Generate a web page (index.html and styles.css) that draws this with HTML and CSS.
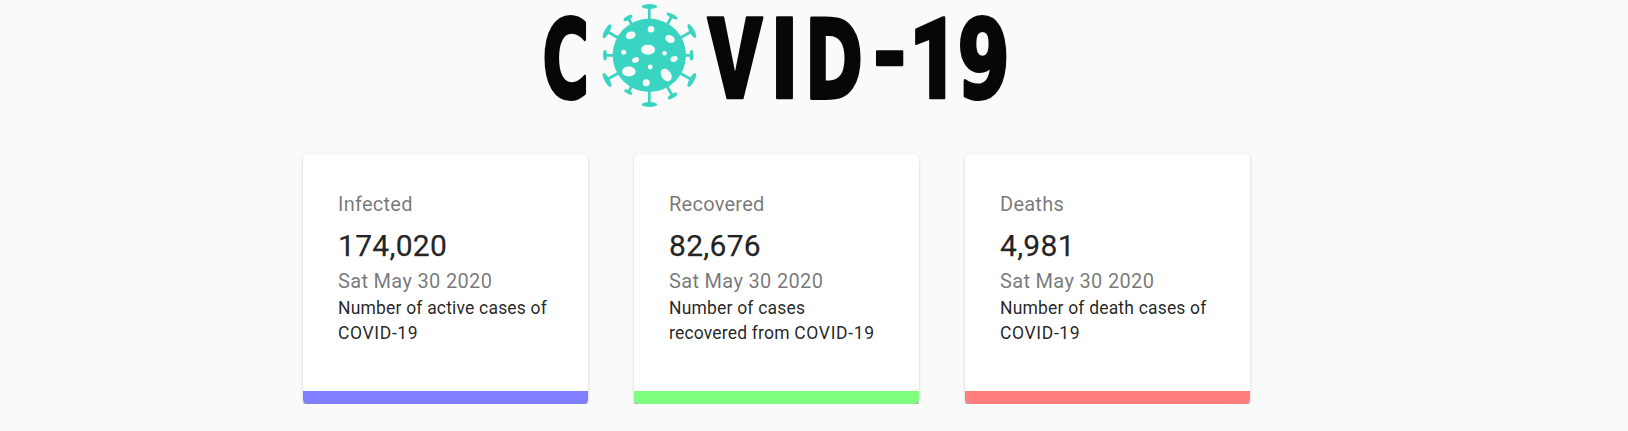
FILE: index.html
```html
<!DOCTYPE html>
<html lang="en">
<head>
<meta charset="utf-8">
<title>COVID-19 Tracker</title>
<link rel="stylesheet" href="styles.css">
</head>
<body>
<main class="container">
  <svg class="logo" width="500" height="115" viewBox="530 0 500 115" role="img" aria-label="COVID-19">
    <g class="logo-text">
      <text class="wide" transform="translate(542.5 97) scale(.58 1)">C</text>
      <text transform="translate(707.8 97.5) scale(.725 1)">V</text>
      <text transform="translate(771.2 97.5) scale(.77 1)">I</text>
      <text class="wide" transform="translate(805 97.5) scale(.64 1)">D</text>
      <text transform="translate(870.5 91) scale(.76 .93)">-</text>
      <text transform="translate(909 97.5) scale(.76 1)">1</text>
      <text class="wide" transform="translate(957.5 97) scale(.69 1)">9</text>
    </g>
    <g class="virus">
      <circle cx="649.3" cy="55.3" r="36.7"/>
      <path class="stems" d="M649.3 7V104M606 55.3H691M608 32L690.5 79M608 79L690.5 32M628.5 18.5L672 95M671.5 17L629 91"/>
      <ellipse cx="649.5" cy="6.5" rx="7.7" ry="2.5"/>
      <ellipse cx="649.5" cy="104.5" rx="7.7" ry="2.5"/>
      <ellipse cx="605" cy="55.3" rx="1.9" ry="5.3"/>
      <ellipse cx="691.5" cy="55.3" rx="1.9" ry="5.3"/>
      <ellipse cx="607" cy="31.3" rx="2.5" ry="7.8" transform="rotate(29 607 31.3)"/>
      <ellipse cx="607" cy="80" rx="2.5" ry="7.8" transform="rotate(-29 607 80)"/>
      <ellipse cx="691.8" cy="31" rx="2.5" ry="7.8" transform="rotate(-29 691.8 31)"/>
      <ellipse cx="691.8" cy="80" rx="2.5" ry="7.8" transform="rotate(29 691.8 80)"/>
      <ellipse cx="628" cy="18" rx="5" ry="2.1" transform="rotate(-29 628 18)"/>
      <ellipse cx="672" cy="16" rx="6.2" ry="2.1" transform="rotate(28 672 16)"/>
      <ellipse cx="628.3" cy="92" rx="4.5" ry="1.7" transform="rotate(28 628.3 92)"/>
      <ellipse cx="672.5" cy="96" rx="5.3" ry="2.1" transform="rotate(-30 672.5 96)"/>
      <g class="spots">
        <circle cx="651" cy="29.3" r="3.3"/>
        <ellipse cx="630.7" cy="35.3" rx="5" ry="3.7" transform="rotate(-22 630.7 35.3)"/>
        <ellipse cx="670" cy="39" rx="5" ry="3.7" transform="rotate(30 670 39)"/>
        <ellipse cx="648" cy="49.7" rx="7" ry="5"/>
        <circle cx="623.7" cy="52.2" r="2.5"/>
        <circle cx="664.6" cy="53.3" r="2.3"/>
        <ellipse cx="635.6" cy="60" rx="3.6" ry="2.7" transform="rotate(-28 635.6 60)"/>
        <ellipse cx="674" cy="59" rx="3.7" ry="2.7" transform="rotate(-25 674 59)"/>
        <circle cx="650.2" cy="67" r="2.4"/>
        <ellipse cx="628.8" cy="71.5" rx="6.8" ry="4.9"/>
        <ellipse cx="666.2" cy="75" rx="4.8" ry="6.8" transform="rotate(-35 666.2 75)"/>
        <circle cx="646.2" cy="82.7" r="3.5"/>
      </g>
    </g>
  </svg>
  <section class="cards">
    <article class="card infected">
      <p class="label">Infected</p>
      <h2 class="count">174,020</h2>
      <p class="date">Sat May 30 2020</p>
      <p class="description">Number of active cases of <span class="disease">COVID-19</span></p>
    </article>
    <article class="card recovered">
      <p class="label">Recovered</p>
      <h2 class="count">82,676</h2>
      <p class="date">Sat May 30 2020</p>
      <p class="description">Number of cases recovered from <span class="disease">COVID-19</span></p>
    </article>
    <article class="card deaths">
      <p class="label">Deaths</p>
      <h2 class="count">4,981</h2>
      <p class="date">Sat May 30 2020</p>
      <p class="description">Number of death cases of <span class="disease">COVID-19</span></p>
    </article>
  </section>
</main>
</body>
</html>
```
FILE: styles.css
```css
* { box-sizing: border-box; }
body {
  margin: 0;
  background: #fafafa;
  color: rgba(0, 0, 0, 0.87);
  font-family: Roboto, "Liberation Sans", sans-serif;
}
.container {
  display: flex;
  flex-direction: column;
  gap: 39px;
  width: 947px;
  margin-left: 303px;
}
.logo { display: block; margin-left: 227px; overflow: visible; }
.logo-text {
  font: 900 114px Roboto, "Liberation Sans", sans-serif;
  fill: #060808;
  stroke: #060808;
  stroke-width: 2.5px;
  stroke-linejoin: round;
}
.logo-text .wide {
  font: 700 109px "DejaVu Sans", sans-serif;
  stroke-width: 4px;
}
.virus { fill: #3ad5c2; }
.stems { stroke: #3ad5c2; stroke-width: 2.7px; fill: none; }
.spots { fill: #fafafa; }
.cards {
  display: grid;
  grid-template-columns: repeat(3, 285px);
  gap: 46px;
}
.card {
  height: 250px;
  padding: 34.5px 35px;
  background: #fff;
  border-bottom: 13px solid;
  border-radius: 5px;
  box-shadow: 0 2.5px 1.25px -1.25px rgba(0, 0, 0, 0.2),
    0 1.25px 1.25px rgba(0, 0, 0, 0.14),
    0 1.25px 3.75px rgba(0, 0, 0, 0.12);
}
.infected { border-color: #7f7fff; }
.recovered { border-color: #7fff7f; }
.deaths { border-color: #ff7f7f; }
.label, .date, .count, .description { margin: 0; font-weight: 400; }
.label, .date {
  color: rgba(0, 0, 0, 0.54);
  font-size: 20px;
  line-height: 30px;
  letter-spacing: 0.25px;
}
.date { letter-spacing: 0.33px; }
.label { margin-bottom: 7px; }
.count {
  font-size: 30px;
  line-height: 40px;
  letter-spacing: 0.3px;
  -webkit-text-stroke: 0.25px currentColor;
}
.description {
  font-size: 17.5px;
  line-height: 25px;
  letter-spacing: 0.01071em;
}
.disease { letter-spacing: 0.65px; white-space: nowrap; }
```
